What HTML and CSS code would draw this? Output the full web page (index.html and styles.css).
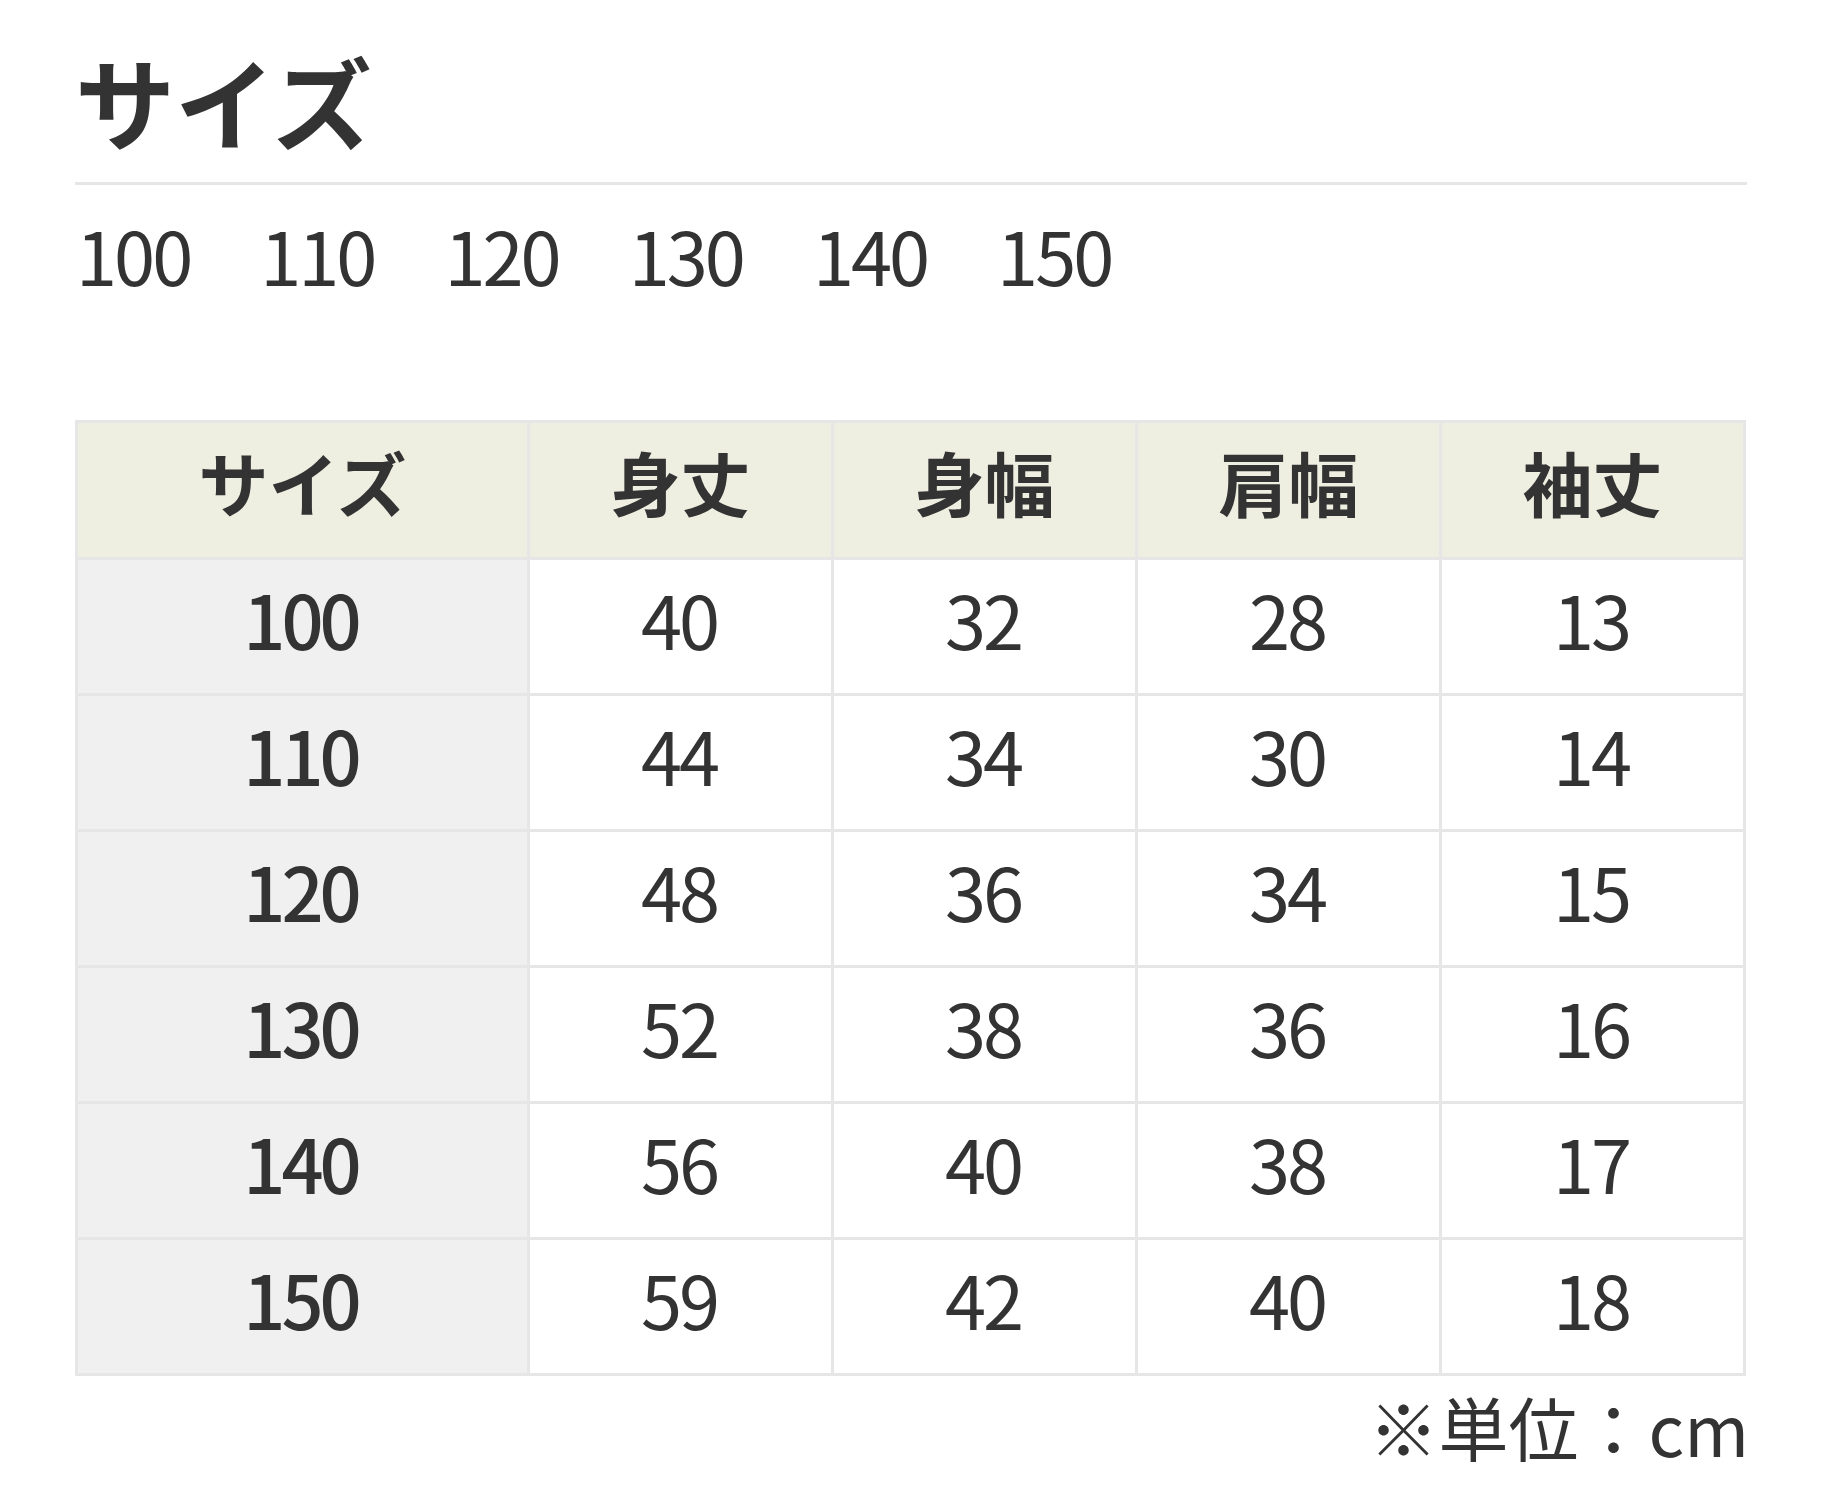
FILE: index.html
```html
<!DOCTYPE html>
<html lang="ja">
<head>
<meta charset="utf-8">
<title>サイズ</title>
<link rel="stylesheet" href="styles.css">
</head>
<body>
<div class="page">
  <h2 class="title">サイズ</h2>
  <ul class="sizes">
    <li>100</li><li>110</li><li>120</li><li>130</li><li>140</li><li>150</li>
  </ul>
  <table class="chart">
    <colgroup>
      <col class="c-size"><col class="c-val"><col class="c-val"><col class="c-val"><col class="c-val">
    </colgroup>
    <thead>
      <tr><th>サイズ</th><th>身丈</th><th>身幅</th><th>肩幅</th><th>袖丈</th></tr>
    </thead>
    <tbody>
      <tr><th>100</th><td>40</td><td>32</td><td>28</td><td>13</td></tr>
      <tr><th>110</th><td>44</td><td>34</td><td>30</td><td>14</td></tr>
      <tr><th>120</th><td>48</td><td>36</td><td>34</td><td>15</td></tr>
      <tr><th>130</th><td>52</td><td>38</td><td>36</td><td>16</td></tr>
      <tr><th>140</th><td>56</td><td>40</td><td>38</td><td>17</td></tr>
      <tr><th>150</th><td>59</td><td>42</td><td>40</td><td>18</td></tr>
    </tbody>
  </table>
  <p class="unit">※単位：cm</p>
</div>
</body>
</html>
```
FILE: styles.css
```css
html, body {
  margin: 0;
  padding: 0;
  background: #ffffff;
}
body {
  font-family: "Noto Sans CJK JP", "Noto Sans", sans-serif;
  color: #333333;
}
.page {
  width: 1672px;
  padding: 0 0 0 75px;
}
.title {
  margin: 0;
  padding-top: 50px;
  padding-bottom: 32px;
  font-size: 100px;
  line-height: 1;
  font-weight: 700;
  border-bottom: 3px solid #e6e6e6;
}
.sizes {
  list-style: none;
  margin: 0;
  padding: 32px 0 0 1px;
  display: flex;
  gap: 70px;
  font-size: 74px;
  line-height: 1;
  font-weight: 400;
  letter-spacing: -3px;
}
.chart {
  margin-top: 129px;
  width: 1670px;
  border-collapse: collapse;
  table-layout: fixed;
}
.c-size { width: 452px; }
.c-val { width: 304px; }
.chart th, .chart td {
  border: 3px solid #e6e6e6;
  text-align: center;
  vertical-align: middle;
  padding: 0;
  line-height: 1;
}
.chart thead th {
  height: 118px;
  padding-bottom: 16px;
  background: #eeeee1;
  font-size: 70px;
  font-weight: 700;
}
.chart tbody th,
.chart tbody td {
  height: 115px;
  padding-bottom: 18px;
  font-size: 74px;
}
.chart tbody th {
  background: #f0f0f0;
  font-weight: 500;
  letter-spacing: -4px;
  text-indent: -4px;
}
.chart tbody td {
  font-weight: 400;
  letter-spacing: -3px;
  text-indent: -3px;
}
.unit {
  width: 1674px;
  margin: 16px 0 0 0;
  text-align: right;
  font-size: 70px;
  line-height: 1;
}
```
